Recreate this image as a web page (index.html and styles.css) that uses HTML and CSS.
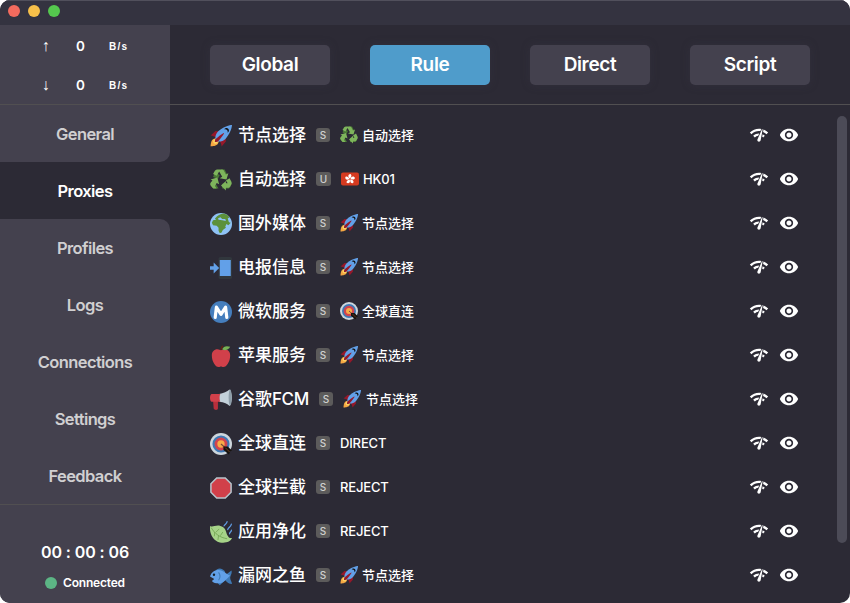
FILE: index.html
```html
<!DOCTYPE html>
<html lang="zh-CN">
<head>
<meta charset="utf-8">
<title>Proxies</title>
<link rel="stylesheet" href="styles.css">
</head>
<body>
<svg class="defs" aria-hidden="true">
  <symbol id="rocket" viewBox="0 0 36 36">
    <path fill="#95182a" d="M1 17l8-7 16 1 1 16-7 8s0-6-6-12-12-6-12-6z"/>
    <path fill="#f5a742" d="M1 35s0-8 3-11 11-2.800 11-2.800S15 29 12 32 1 35 1 35z"/>
    <circle fill="#fbd264" cx="9" cy="27" r="4"/>
    <path fill="#62a0e8" d="M36 0S26 0 14 10c-6 5-6 14-4 16s11 2 16-4C36 10 36 0 36 0z"/>
    <path fill="#111" d="M27 5c-1.600 0-3 1-3.640 2.360.5-.23 1.050-.36 1.640-.36 2.200 0 4 1.800 4 4 0 .59-.13 1.140-.36 1.640C30 12 31 10.600 31 9c0-2.200-1.800-4-4-4z"/>
    <path fill="#95182a" d="M8 28s0-4 1-5 13-11 14-10-9 13-10 14-5 1-5 1z"/>
  </symbol>
  <symbol id="recycle" viewBox="0 0 36 36">
    <path fill="#4a7a35" d="M18 1h6l4 8-8 2zM8 6l8 4-3 6-8-3zM0 24l8-2 6 10H5zM20 24h9l5 4-3 4H20z"/>
    <g fill="#7eb55c">
      <path d="M13 1h7c1 0 2 .5 2.500 1.500L26 9l4-2-3 10-11-2 4-2.500L15 4l-4 7-6-3 3-5c1-1.500 3-2 5-2z"/>
      <path d="M26 19l6-4 3 6c.8 1.500.8 3 0 4.500l-2 3c-1 1.500-2 2-4 2h-3v4.500l-8-8 8-7.500v4h3z"/>
      <path d="M1 17l11-3 3 11-4-2-3 5 3 4H7c-2 0-3-1-4-2.500L1 27c-.8-1.500-.8-3 0-4.500L4 19z"/>
    </g>
  </symbol>
  <symbol id="globe" viewBox="0 0 36 36">
    <circle cx="18" cy="18" r="18" fill="#8fc2f5"/>
    <path fill="#5c913b" d="M9 8c3-4 8-6 13-7l6 2 4 4-3 2 2 6 3 1-4 4-3-2-2 4 1 2-5 4-2 4-3 1-2-4v-5l-3-3-6-1-2-4 2-4 5-1-2-2z"/>
    <path fill="#8fc2f5" d="M13 9l4-2 3 3 5 0 1 3-6-1-6-1z"/>
  </symbol>
  <symbol id="phone" viewBox="0 0 36 36">
    <rect x="14" width="22" height="36" rx="3" fill="#31373d"/>
    <path fill="#62a0e8" d="M16 5h18v26H16zM0 15h6V9l9 9-9 9v-6H0z"/>
  </symbol>
  <symbol id="metro" viewBox="0 0 36 36">
    <circle cx="18" cy="18" r="18" fill="#457ebd"/>
    <path d="M8.500 27l2-17L18 22l7.500-12 2 17" fill="none" stroke="#fff" stroke-width="5.200" stroke-linecap="round" stroke-linejoin="round"/>
  </symbol>
  <symbol id="target" viewBox="0 0 36 36">
    <circle cx="18" cy="18" r="18" fill="#ccd6dd"/>
    <circle cx="18" cy="18" r="14" fill="#3f79b5"/>
    <circle cx="18" cy="18" r="10.500" fill="#d2444e"/>
    <circle cx="18" cy="18" r="6" fill="#f8ac48"/>
    <path d="M18 18l9 8" stroke="#784b3b" stroke-width="2"/>
    <path d="M22 22l7 0 7 7-3 1-2 5-9-7z" fill="#17130f"/>
    <path d="M25 24l7 7" stroke="#a85b2b"/>
  </symbol>
  <symbol id="apple" viewBox="0 0 36 36">
    <path fill="#662113" d="M17 9c0-4 1-6 3-8l2 1c-2 2-3 4-3 7z"/>
    <path fill="#d1404a" d="M24 7c-3 0-4 1.500-6 1.500S15 7 12 7C7 7 3 11 3 17c0 10 6 19 11 19 2 0 3-1 4-1s2 1 4 1c5 0 11-9 11-19 0-6-4-10-9-10z"/>
    <path fill="#77b255" d="M20 7c2-5 7-6 13-4-3 5-8 7-13 4z"/>
  </symbol>
  <symbol id="megaphone" viewBox="0 0 36 36">
    <path fill="#b82f3c" d="M5 18h8v14c0 3-6 3-7 0z"/>
    <path fill="#c3d1da" d="M15 8C22 7 28 5 32 1c5 6 5 20 0 27-3-4-9-6-17-7z"/>
    <ellipse cx="33" cy="14" rx="2.500" ry="13" fill="#8e9ea9"/>
    <path fill="#d1404a" d="M3 8h14c-2 3-2 10 0 13H3c-4 0-4-13 0-13z"/>
  </symbol>
  <symbol id="stop" viewBox="0 0 36 36">
    <path fill="#d1404a" stroke="#b8c4cc" stroke-width="2.500" d="M11 1.500h14L34.500 11v14L25 34.500H11L1.500 25V11z"/>
  </symbol>
  <symbol id="leaf" viewBox="0 0 36 36">
    <path fill="#a6d388" d="M0 8c4 3 9-2 17 0 10 2 9 12 12 16 2 4 5 4 7 4-2 6-11 9-20 7C4 32-1 20 0 8z"/>
    <path d="M2 11c6 10 14 16 26 18M8 18l-1 7M14 24l-1 7M10 18l5-5M17 24l4-6" fill="none" stroke="#6fa04e" stroke-width="1.300"/>
    <path d="M28 1c0 4-4 4-5 7M35 5c-1 5-5 5-6 9M35 15c0 3-3 3-3 6" fill="none" stroke="#62a0e8" stroke-width="2" stroke-linecap="round"/>
  </symbol>
  <symbol id="fish" viewBox="0 0 36 36">
    <path fill="#3f79b5" d="M8 11c4-7 11-7 16-1l2 6 9-7c2 4-2 8-2 12s3 7 3 10c-5 0-8-2-11-6l-9 8-6-6z"/>
    <path fill="#62a0e8" d="M0 19c2-7 7-11 14-11 8 0 12 7 19 9-5 5-11 13-19 13-5 0-8-1-11-4l4-3z"/>
    <circle cx="6.500" cy="16" r="2" fill="#17202a"/>
    <path d="M14 12c3 4 3 9 0 13" fill="none" stroke="#3f79b5" stroke-width="1.800"/>
  </symbol>
  <symbol id="flag" viewBox="0 0 36 36">
    <rect y="5" width="36" height="26" rx="4" fill="#d53a20"/>
    <g fill="#fff" transform="translate(18 18)">
      <path id="petal" d="M0-1C-5-4-4-10 1-10c3 2 2 6-1 9z"/>
      <use href="#petal" transform="rotate(72)"/><use href="#petal" transform="rotate(144)"/><use href="#petal" transform="rotate(216)"/><use href="#petal" transform="rotate(288)"/>
    </g>
  </symbol>
  <symbol id="check" viewBox="0 0 24 24">
    <path d="M15.900 5c-.17 0-.32.09-.41.230l-.07.150-5.180 11.650c-.16.290-.26.610-.26.960 0 1.110.9 2.010 2.010 2.010.96 0 1.770-.68 1.960-1.590l.01-.03L16.400 5.500c0-.28-.22-.5-.5-.5zM1 9l2 2c2.880-2.880 6.790-4.080 10.530-3.620l1.190-2.680C9.890 3.840 4.740 5.270 1 9zm20 2l2-2c-1.640-1.640-3.550-2.820-5.590-3.570l-.53 2.820c1.500.620 2.900 1.530 4.120 2.750zm-4 4l2-2c-.8-.8-1.700-1.420-2.660-1.890l-.55 2.920c.42.270.83.590 1.210.970zM5 13l2 2c1.130-1.130 2.560-1.790 4.030-2l1.280-2.880c-2.630-.08-5.300.870-7.310 2.880z"/>
  </symbol>
  <symbol id="eye" viewBox="0 0 24 24">
    <path d="M12 4.500C7 4.500 2.730 7.610 1 12c1.730 4.390 6 7.500 11 7.500s9.270-3.110 11-7.500c-1.730-4.390-6-7.500-11-7.500zM12 17c-2.760 0-5-2.240-5-5s2.240-5 5-5 5 2.240 5 5-2.240 5-5 5zm0-8c-1.660 0-3 1.340-3 3s1.340 3 3 3 3-1.340 3-3-1.340-3-3-3z"/>
  </symbol>
</svg>
<div class="window">
  <header class="titlebar"><i class="dot red"></i><i class="dot yellow"></i><i class="dot green"></i></header>
  <div class="body">
    <aside class="sidebar">
      <div class="traffic">
        <div class="rate"><span class="arrow">↑</span><b>0</b><span class="unit">B/s</span></div>
        <div class="rate"><span class="arrow">↓</span><b>0</b><span class="unit">B/s</span></div>
      </div>
      <nav class="nav">
        <a class="item before">General</a>
        <a class="item active">Proxies</a>
        <a class="item after">Profiles</a>
        <a class="item">Logs</a>
        <a class="item">Connections</a>
        <a class="item">Settings</a>
        <a class="item">Feedback</a>
      </nav>
      <div class="status">
        <div class="clock">00 : 00 : 06</div>
        <div class="conn"><i class="led"></i>Connected</div>
      </div>
    </aside>
    <main class="main">
      <div class="modes">
        <button class="mode">Global</button>
        <button class="mode on">Rule</button>
        <button class="mode">Direct</button>
        <button class="mode">Script</button>
      </div>
      <div class="content">
        <div class="list">
          <div class="row"><svg class="big"><use href="#rocket"/></svg><span class="name">节点选择</span><span class="tag">S</span><svg class="small"><use href="#recycle"/></svg><span class="now">自动选择</span><svg class="act"><use href="#check"/></svg><svg class="act"><use href="#eye"/></svg></div>
          <div class="row"><svg class="big"><use href="#recycle"/></svg><span class="name">自动选择</span><span class="tag u">U</span><svg class="small"><use href="#flag"/></svg><span class="now plain">HK01</span><svg class="act"><use href="#check"/></svg><svg class="act"><use href="#eye"/></svg></div>
          <div class="row"><svg class="big"><use href="#globe"/></svg><span class="name">国外媒体</span><span class="tag">S</span><svg class="small"><use href="#rocket"/></svg><span class="now">节点选择</span><svg class="act"><use href="#check"/></svg><svg class="act"><use href="#eye"/></svg></div>
          <div class="row"><svg class="big"><use href="#phone"/></svg><span class="name">电报信息</span><span class="tag">S</span><svg class="small"><use href="#rocket"/></svg><span class="now">节点选择</span><svg class="act"><use href="#check"/></svg><svg class="act"><use href="#eye"/></svg></div>
          <div class="row"><svg class="big"><use href="#metro"/></svg><span class="name">微软服务</span><span class="tag">S</span><svg class="small"><use href="#target"/></svg><span class="now">全球直连</span><svg class="act"><use href="#check"/></svg><svg class="act"><use href="#eye"/></svg></div>
          <div class="row"><svg class="big"><use href="#apple"/></svg><span class="name">苹果服务</span><span class="tag">S</span><svg class="small"><use href="#rocket"/></svg><span class="now">节点选择</span><svg class="act"><use href="#check"/></svg><svg class="act"><use href="#eye"/></svg></div>
          <div class="row"><svg class="big"><use href="#megaphone"/></svg><span class="name wide">谷歌<span class="latin">FCM</span></span><span class="tag">S</span><svg class="small"><use href="#rocket"/></svg><span class="now">节点选择</span><svg class="act"><use href="#check"/></svg><svg class="act"><use href="#eye"/></svg></div>
          <div class="row"><svg class="big"><use href="#target"/></svg><span class="name">全球直连</span><span class="tag">S</span><span class="now plain">DIRECT</span><svg class="act"><use href="#check"/></svg><svg class="act"><use href="#eye"/></svg></div>
          <div class="row"><svg class="big"><use href="#stop"/></svg><span class="name">全球拦截</span><span class="tag">S</span><span class="now plain">REJECT</span><svg class="act"><use href="#check"/></svg><svg class="act"><use href="#eye"/></svg></div>
          <div class="row"><svg class="big"><use href="#leaf"/></svg><span class="name">应用净化</span><span class="tag">S</span><span class="now plain">REJECT</span><svg class="act"><use href="#check"/></svg><svg class="act"><use href="#eye"/></svg></div>
          <div class="row"><svg class="big"><use href="#fish"/></svg><span class="name">漏网之鱼</span><span class="tag">S</span><svg class="small"><use href="#rocket"/></svg><span class="now">节点选择</span><svg class="act"><use href="#check"/></svg><svg class="act"><use href="#eye"/></svg></div>
        </div>
        <div class="scrollbar"></div>
      </div>
    </main>
  </div>
</div>
</body>
</html>
```
FILE: styles.css
```css
* { box-sizing: border-box; }
body {
  margin: 0;
  background: #fff;
  font-family: Inter, "Noto Sans CJK SC", sans-serif;
  color: #fff;
}
.defs { display: none; }
.window {
  width: 850px;
  height: 603px;
  border-radius: 10px;
  overflow: hidden;
  background: #2c2a35;
}
.titlebar {
  height: 25px;
  background: #343340;
  border-top: 1px solid #51505c;
  display: flex;
  gap: 8px;
  padding: 4px 8px;
}
.dot { width: 12px; height: 12px; border-radius: 50%; }
.red { background: #f36b5e; }
.yellow { background: #f7c04a; }
.green { background: #55c84e; }
.body { display: flex; height: 578px; }
.sidebar { width: 170px; display: flex; flex-direction: column; }
.traffic {
  height: 80px;
  background: #44414e;
  border-bottom: 1px solid #514f51;
  padding-top: 1px;
}
.rate { height: 39px; display: flex; align-items: center; padding-left: 40px; }
.arrow { width: 12px; text-align: center; font: 700 16px/18px "Liberation Mono", monospace; padding-top: 2px; }
.rate b { width: 57px; text-align: center; font-size: 13.5px; line-height: 18px; font-weight: 600; }
.unit { font: 700 10px/12px "Liberation Sans", sans-serif; letter-spacing: 1.3px; padding-top: 2px; }
.nav { background: #2c2a35; }
.item {
  display: flex;
  height: 57px;
  align-items: center;
  justify-content: center;
  background: #44414e;
  color: #d0cfd1;
  font-size: 16.5px;
  font-weight: 600;
  letter-spacing: -.6px;
}
.before { border-radius: 0 0 10px 0; }
.active { background: #2c2a35; color: #fff; }
.after { border-radius: 0 10px 0 0; }
.status {
  flex: 1;
  background: #44414e;
  border-top: 1px solid #514f51;
  padding-top: 37px;
  text-align: center;
}
.clock { font-size: 16px; line-height: 20px; font-weight: 600; letter-spacing: -.1px; }
.conn {
  display: flex;
  align-items: center;
  justify-content: center;
  gap: 6px;
  font-size: 12px;
  line-height: 16px;
  font-weight: 600;
  letter-spacing: -.2px;
  margin-top: 13px;
}
.led { width: 12px; height: 12px; border-radius: 50%; background: #5cb585; }
.main { flex: 1; display: flex; flex-direction: column; }
.modes {
  height: 80px;
  display: flex;
  justify-content: space-between;
  align-items: center;
  padding: 0 40px;
  border-bottom: 1px solid #514f51;
}
.mode {
  width: 120px;
  height: 40px;
  border: 0;
  border-radius: 5px;
  background: #44414e;
  box-shadow: 0 0 8px rgba(60, 56, 72, .35);
  color: #fff;
  font: 600 19px Inter, sans-serif;
  letter-spacing: -.35px;
  padding: 0;
}
.on { background: #4f9ccb; }
.content { flex: 1; display: flex; padding: 8px 3px 0 40px; overflow: hidden; }
.list { width: 589px; }
.row { height: 44px; display: flex; align-items: center; }
.big { width: 22px; height: 22px; margin: 1px 6px 0 0; flex: none; }
.name { width: 68px; font-size: 17px; line-height: 24px; font-weight: 500; white-space: nowrap; }
.name.wide { width: 71px; }
.latin { font-weight: 500; letter-spacing: -.4px; }
.tag {
  width: 14px;
  height: 14px;
  margin: 0 10px;
  border-radius: 3px;
  background: #5c5b5b;
  color: #d0d0d0;
  font-size: 10px;
  font-weight: 500;
  line-height: 15px;
  text-align: center;
}
.tag.u { width: 15px; }
.small { width: 18px; height: 18px; margin-right: 4px; flex: none; }
.now { flex: 1; font-size: 13px; line-height: 18px; font-weight: 500; }
.name.wide ~ .now { padding-left: 1px; }
.plain { letter-spacing: -.15px; }
.act { width: 20px; height: 20px; fill: #fff; flex: none; margin-bottom: 1px; }
.act + .act { margin-left: 10px; }
.scrollbar {
  width: 10px;
  height: 427px;
  border-radius: 5px;
  background: #4c4b57;
  margin: 3px 0 0 auto;
}
```
